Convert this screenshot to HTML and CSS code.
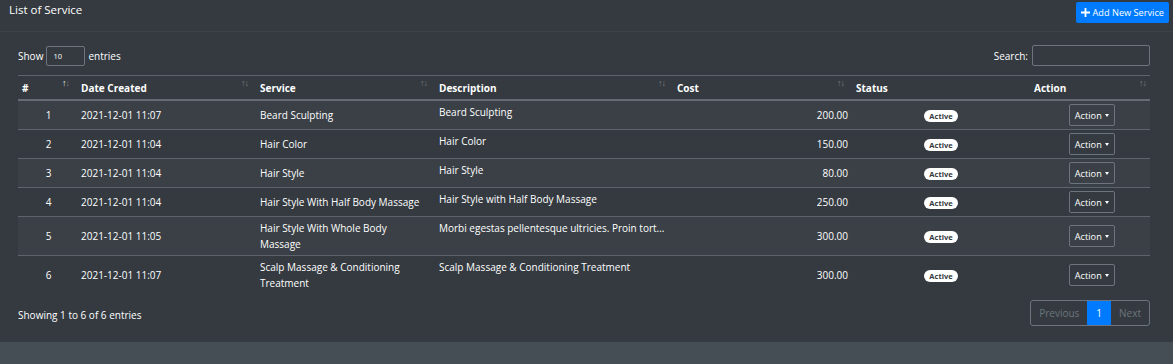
FILE: index.html
```html
<!DOCTYPE html>
<html lang="en">
<head>
    <meta charset="UTF-8">
    <meta name="viewport" content="width=device-width, initial-scale=1.0">
    <title>List of Service</title>
    <link rel="stylesheet" href="styles.css">
</head>
<body>

<div class="card">
    <div class="card-header">
        <h3 class="card-title">List of Service</h3>
        <a href="#" class="btn-new">
            <svg width="9" height="9" viewBox="0 0 10 10"><path d="M4 0h2v4h4v2H6v4H4V6H0V4h4z" fill="#fff"/></svg>
            Add New Service
        </a>
    </div>
    <div class="card-body">
        <div class="dt-top">
            <label>Show <select class="dt-select"><option>10</option></select> entries</label>
            <label>Search: <input type="search" class="dt-search"></label>
        </div>

        <table class="dt-table">
            <colgroup>
                <col style="width:55px">
                <col style="width:179px">
                <col style="width:179px">
                <col style="width:238px">
                <col style="width:179px">
                <col style="width:178px">
                <col style="width:124px">
            </colgroup>
            <thead>
                <tr>
                    <th class="th-num">#<span class="sort asc"><i>↑</i><i>↓</i></span></th>
                    <th>Date Created<span class="sort"><i>↑</i><i>↓</i></span></th>
                    <th>Service<span class="sort"><i>↑</i><i>↓</i></span></th>
                    <th>Description<span class="sort"><i>↑</i><i>↓</i></span></th>
                    <th>Cost<span class="sort"><i>↑</i><i>↓</i></span></th>
                    <th>Status</th>
                    <th>Action<span class="sort"><i>↑</i><i>↓</i></span></th>
                </tr>
            </thead>
            <tbody>
                <tr>
                    <td class="num">1</td>
                    <td>2021-12-01 11:07</td>
                    <td>Beard Sculpting</td>
                    <td class="desc">Beard Sculpting</td>
                    <td class="cost">200.00</td>
                    <td class="status"><span class="badge">Active</span></td>
                    <td class="action"><button class="btn-action">Action <span class="caret"></span></button></td>
                </tr>
                <tr>
                    <td class="num">2</td>
                    <td>2021-12-01 11:04</td>
                    <td>Hair Color</td>
                    <td class="desc">Hair Color</td>
                    <td class="cost">150.00</td>
                    <td class="status"><span class="badge">Active</span></td>
                    <td class="action"><button class="btn-action">Action <span class="caret"></span></button></td>
                </tr>
                <tr>
                    <td class="num">3</td>
                    <td>2021-12-01 11:04</td>
                    <td>Hair Style</td>
                    <td class="desc">Hair Style</td>
                    <td class="cost">80.00</td>
                    <td class="status"><span class="badge">Active</span></td>
                    <td class="action"><button class="btn-action">Action <span class="caret"></span></button></td>
                </tr>
                <tr>
                    <td class="num">4</td>
                    <td>2021-12-01 11:04</td>
                    <td>Hair Style With Half Body Massage</td>
                    <td class="desc">Hair Style with Half Body Massage</td>
                    <td class="cost">250.00</td>
                    <td class="status"><span class="badge">Active</span></td>
                    <td class="action"><button class="btn-action">Action <span class="caret"></span></button></td>
                </tr>
                <tr>
                    <td class="num">5</td>
                    <td>2021-12-01 11:05</td>
                    <td>Hair Style With Whole Body Massage</td>
                    <td class="desc">Morbi egestas pellentesque ultricies. Proin tort...</td>
                    <td class="cost">300.00</td>
                    <td class="status"><span class="badge">Active</span></td>
                    <td class="action"><button class="btn-action">Action <span class="caret"></span></button></td>
                </tr>
                <tr>
                    <td class="num">6</td>
                    <td>2021-12-01 11:07</td>
                    <td>Scalp Massage &amp; Conditioning Treatment</td>
                    <td class="desc">Scalp Massage &amp; Conditioning Treatment</td>
                    <td class="cost">300.00</td>
                    <td class="status"><span class="badge">Active</span></td>
                    <td class="action"><button class="btn-action">Action <span class="caret"></span></button></td>
                </tr>
            </tbody>
        </table>

        <div class="dt-bottom">
            <div class="dt-info">Showing 1 to 6 of 6 entries</div>
            <ul class="pagination">
                <li class="page disabled">Previous</li>
                <li class="page active">1</li>
                <li class="page disabled">Next</li>
            </ul>
        </div>
    </div>
</div>

</body>
</html>
```

FILE: styles.css
```css
body {
    margin: 0;
    background-color: #454d55;
    color: #fff;
    font-family: "Open Sans", "Noto Sans", sans-serif;
    font-size: 10px;
    line-height: 16px;
}
.card {
    background-color: #343a40;
}
.card-header {
    display: flex;
    justify-content: space-between;
    align-items: flex-start;
    height: 29px;
    padding: 2px 4px 0 9px;
    border-bottom: 1px solid #3c4248;
}
.card-title {
    margin: 0;
    font-size: 11.5px;
    font-weight: normal;
    line-height: 16px;
}
.btn-new {
    display: flex;
    align-items: center;
    gap: 3px;
    height: 21px;
    padding: 0 5px;
    background-color: #007bff;
    color: #fff;
    text-decoration: none;
    font-size: 9.2px;
    border-radius: 2px;
}
.card-body {
    padding: 13px 23px 16px 18px;
}
.dt-top {
    display: flex;
    justify-content: space-between;
    align-items: center;
    height: 21px;
    margin-bottom: 9px;
}
.dt-top label {
    display: flex;
    align-items: center;
    gap: 3px;
}
.dt-select {
    width: 39px;
    height: 20px;
    padding: 0 6px;
    background-color: #343a40;
    color: #fff;
    border: 1px solid #6c757d;
    border-radius: 2px;
    font-size: 7.5px;
    font-family: inherit;
    appearance: none;
}
.dt-search {
    width: 118px;
    height: 21px;
    box-sizing: border-box;
    background-color: #343a40;
    border: 1px solid #6c757d;
    border-radius: 2px;
    margin-left: 1px;
}
.dt-table {
    width: 100%;
    table-layout: fixed;
    border-collapse: collapse;
}
.dt-table th {
    position: relative;
    text-align: left;
    font-weight: bold;
    padding: 4px 8px 3px;
    border-top: 1px solid #5d646b;
    border-bottom: 2px solid #646b72;
}
.dt-table th.th-num {
    padding-left: 4px;
}
.sort {
    position: absolute;
    top: 2px;
    right: 4px;
    font-size: 9px;
    line-height: 10px;
    letter-spacing: -1px;
}
.sort i {
    font-style: normal;
    opacity: 0.3;
}
.sort.asc i:first-child {
    opacity: 0.9;
}
.dt-table td {
    padding: 3px 8px;
    vertical-align: middle;
    border-top: 1px solid #5d646b;
}
.dt-table tbody tr:first-child td {
    border-top: none;
}
.dt-table tbody tr:nth-of-type(odd) {
    background-color: rgba(255, 255, 255, 0.03);
}
.dt-table td.num {
    text-align: center;
    padding-left: 10px;
    padding-right: 4px;
}
.dt-table td.desc {
    vertical-align: top;
    padding-top: 3px;
    white-space: nowrap;
    overflow: hidden;
}
.dt-table td.cost {
    text-align: right;
    padding-right: 0;
}
.dt-table td.status {
    text-align: center;
    padding-left: 16px;
}
.dt-table td.action {
    text-align: center;
    padding-left: 16px;
}
.badge {
    display: inline-block;
    padding: 0 5px;
    background-color: #fff;
    color: #343a40;
    border-radius: 8px;
    font-size: 7.5px;
    font-weight: bold;
    line-height: 12px;
    vertical-align: middle;
}
.btn-action {
    height: 22px;
    padding: 0 5px;
    background-color: transparent;
    color: #fff;
    border: 1px solid #6c757d;
    border-radius: 2px;
    font-family: inherit;
    font-size: 9.2px;
    vertical-align: middle;
}
.caret {
    display: inline-block;
    width: 0;
    height: 0;
    margin-left: 1px;
    vertical-align: 2px;
    border-top: 3px solid #fff;
    border-left: 2.5px solid transparent;
    border-right: 2.5px solid transparent;
}
.dt-bottom {
    display: flex;
    justify-content: space-between;
    align-items: center;
    margin-top: 6px;
}
.dt-info {
    padding-top: 4px;
}
.pagination {
    display: flex;
    margin: 0;
    padding: 0;
    list-style: none;
    border: 1px solid #6c757d;
    border-radius: 3px;
}
.page {
    height: 24px;
    line-height: 24px;
    padding: 0 8px;
    font-size: 10px;
}
.page.disabled {
    color: #6c757d;
}
.page.active {
    background-color: #007bff;
    color: #fff;
    padding: 0 9px;
}
```
